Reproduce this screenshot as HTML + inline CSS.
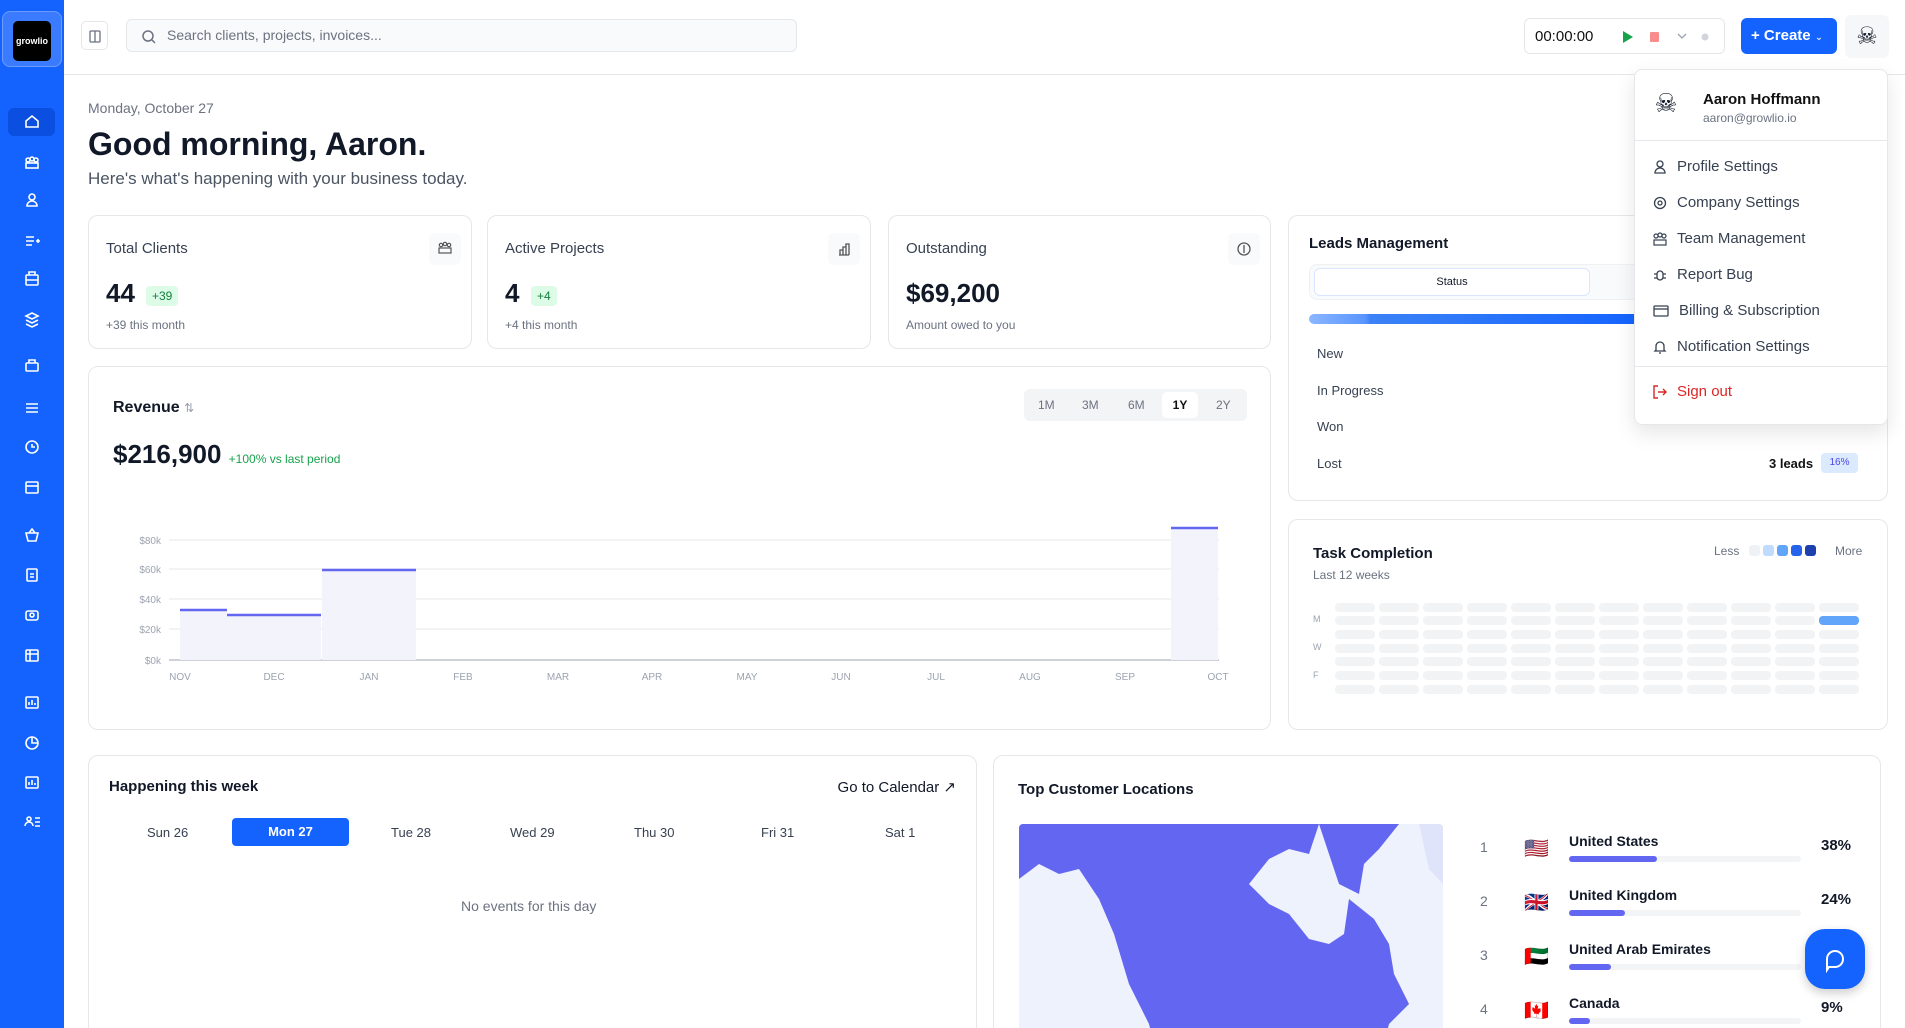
<!DOCTYPE html>
<html style="width:1905px;height:1028px;overflow:hidden"><head><meta charset="utf-8"><style>
*{box-sizing:border-box;margin:0;padding:0}
body{width:1905px;height:1028px;overflow:hidden;background:#fff;font-family:"Liberation Sans",sans-serif;color:#111827;position:relative}
.abs{position:absolute}
.sb{left:0;top:0;width:64px;height:1028px;background:#1463ff}
.card{position:absolute;border:1px solid #e5e7eb;border-radius:10px;background:#fff}
.menu div{position:absolute;left:18px;font-size:15px;color:#374151;display:flex;align-items:center;gap:10px}
.row{position:absolute;font-size:13px;color:#374151}
.muted{color:#6b7280}
</style></head><body>
<div class="abs sb">
 <div class="abs" style="left:2px;top:11px;width:60px;height:56px;border-radius:8px;background:#3a7bff;border:1px solid #6b9bff"></div>
 <div class="abs" style="left:13px;top:21px;width:38px;height:40px;background:#000;border-radius:5px;color:#fff;font-size:9px;font-weight:bold;line-height:40px;text-align:center">growlio</div>
 <div class="abs" style="left:8px;top:108px;width:47px;height:28px;background:#0a4fe0;border-radius:6px"></div>
 <svg class="abs" style="left:0;top:0" width="64" height="1028" fill="none" stroke="#fff" stroke-width="1.6">
  <path d="M26 127v-6l6-5 6 5v6z"/>
  <g transform="translate(0,160)"><circle cx="28" cy="0" r="2"/><circle cx="36" cy="0" r="2"/><circle cx="32" cy="-1" r="2"/><rect x="26" y="3" width="12" height="5"/></g>
  <g transform="translate(0,200)"><circle cx="32" cy="-3" r="3"/><path d="M27 6a5 5 0 0 1 10 0z"/></g>
  <path d="M26 237h8M26 241h8M26 245h6M36 241h4M38 239v4"/>
  <rect x="26" y="275" width="12" height="10" rx="1"/><path d="M29 275v-3h6v3M26 280h12"/>
  <path d="M32 313l6 3-6 3-6-3zM26 320l6 3 6-3M26 324l6 3 6-3"/>
  <rect x="26" y="363" width="12" height="8" rx="1"/><path d="M29 363v-3h6v3"/>
  <path d="M26 404h12M26 408h12M26 412h12"/>
  <circle cx="32" cy="447" r="6"/><path d="M32 444v3h3"/>
  <rect x="26" y="482" width="12" height="11" rx="1"/><path d="M26 486h12"/>
  <path d="M26 533h12l-2 8h-8z M29 533l3-4 3 4"/>
  <rect x="27" y="569" width="10" height="12" rx="1"/><path d="M30 574h4M30 577h4"/>
  <rect x="26" y="611" width="12" height="9" rx="2"/><circle cx="32" cy="615" r="2"/>
  <rect x="26" y="650" width="12" height="11" rx="1"/><path d="M26 654h12M30 650v11"/>
  <rect x="26" y="697" width="12" height="11" rx="1"/><path d="M29 705v-3M32 705v-5M35 705v-2"/>
  <circle cx="32" cy="743" r="6"/><path d="M32 737v6h6"/>
  <rect x="26" y="777" width="12" height="11" rx="1"/><path d="M29 785v-3M32 785v-5M35 785v-2"/>
  <circle cx="29" cy="819" r="2"/><path d="M25 826a4 4 0 0 1 8 0M35 818h5M35 822h5M35 826h5"/>
 </svg>
</div>
<div class="abs" style="left:64px;top:74px;width:1841px;height:1px;background:#e5e7eb"></div>
<div class="abs" style="left:81px;top:21px;width:27px;height:29px;border:1px solid #e5e7eb;border-radius:5px"><svg width="27" height="29" fill="none" stroke="#6b7280" stroke-width="1.3"><rect x="8" y="9" width="10" height="11" rx="1"/><path d="M13 9v11"/></svg></div>
<div class="abs" style="left:126px;top:19px;width:671px;height:33px;border:1px solid #e5e7eb;border-radius:6px;background:#f9fafb;font-size:14px;color:#6b7280;line-height:31px;padding-left:40px">Search clients, projects, invoices...
 <svg class="abs" style="left:14px;top:9px" width="16" height="16" fill="none" stroke="#6b7280" stroke-width="1.5"><circle cx="7" cy="7" r="5"/><path d="M11 11l3 3"/></svg></div>
<div class="abs" style="left:1524px;top:18px;width:201px;height:36px;border:1px solid #e5e7eb;border-radius:6px">
 <span class="abs" style="left:10px;top:9px;font-size:15px;color:#111">00:00:00</span>
 <svg class="abs" style="left:95px;top:10px" width="100" height="16"><path d="M3 2l10 6-10 6z" fill="#16a34a"/><rect x="30" y="3" width="9" height="10" rx="1" fill="#f87171" opacity=".8"/><path d="M58 5l4 4 4-4" stroke="#9ca3af" fill="none" stroke-width="1.3"/><circle cx="85" cy="8" r="3.5" fill="#d1d5db"/></svg>
</div>
<div class="abs" style="left:1741px;top:18px;width:96px;height:36px;background:#1463ff;border-radius:6px;color:#fff;font-size:15px;font-weight:bold;line-height:36px;padding-left:10px">+ Create <span style="font-size:10px;font-weight:normal">&#8964;</span></div>
<div class="abs" style="left:1845px;top:15px;width:44px;height:43px;background:#f6f7f8;border-radius:6px;font-size:24px;text-align:center;line-height:43px">☠</div>
<div class="abs muted" style="left:88px;top:100px;font-size:14px">Monday, October 27</div>
<div class="abs" style="left:88px;top:126px;font-size:32px;font-weight:bold">Good morning, Aaron.</div>
<div class="abs" style="left:88px;top:169px;font-size:17px;color:#4b5563">Here's what's happening with your business today.</div>
<div class="card" style="left:88px;top:215px;width:384px;height:134px">
 <div class="abs" style="left:17px;top:24px;font-size:15px;color:#374151">Total Clients</div>
 <div class="abs" style="right:10px;top:17px;width:32px;height:32px;background:#f9fafb;border-radius:6px"><svg width="32" height="32" fill="none" stroke="#555" stroke-width="1.2"><circle cx="12" cy="12" r="1.7"/><circle cx="20" cy="12" r="1.7"/><circle cx="16" cy="11" r="1.7"/><rect x="10" y="15" width="12" height="5"/></svg></div>
 <div class="abs" style="left:17px;top:62px;font-size:26px;font-weight:bold">44</div>
 <div class="abs" style="left:57px;top:70px;background:#dcfce7;color:#15803d;font-size:12px;padding:3px 6px;border-radius:4px">+39</div>
 <div class="abs muted" style="left:17px;top:102px;font-size:12px">+39 this month</div>
</div>
<div class="card" style="left:487px;top:215px;width:384px;height:134px">
 <div class="abs" style="left:17px;top:24px;font-size:15px;color:#374151">Active Projects</div>
 <div class="abs" style="right:10px;top:17px;width:32px;height:32px;background:#f9fafb;border-radius:6px"><svg width="32" height="32" fill="none" stroke="#555" stroke-width="1.3"><path d="M11 22h10M12 22v-5h3v5M15 22v-8h3v8M18 22v-11h3v11"/></svg></div>
 <div class="abs" style="left:17px;top:62px;font-size:26px;font-weight:bold">4</div>
 <div class="abs" style="left:43px;top:70px;background:#dcfce7;color:#15803d;font-size:12px;padding:3px 6px;border-radius:4px">+4</div>
 <div class="abs muted" style="left:17px;top:102px;font-size:12px">+4 this month</div>
</div>
<div class="card" style="left:888px;top:215px;width:383px;height:134px">
 <div class="abs" style="left:17px;top:24px;font-size:15px;color:#374151">Outstanding</div>
 <div class="abs" style="right:10px;top:17px;width:32px;height:32px;background:#f9fafb;border-radius:6px"><svg width="32" height="32" fill="none" stroke="#555" stroke-width="1.3"><circle cx="16" cy="16" r="6"/><path d="M16 12v8"/></svg></div>
 <div class="abs" style="left:17px;top:62px;font-size:26px;font-weight:bold">$69,200</div>
 <div class="abs muted" style="left:17px;top:102px;font-size:12px">Amount owed to you</div>
</div>
<div class="card" style="left:1288px;top:215px;width:600px;height:286px">
 <div class="abs" style="left:20px;top:19px;font-size:15px;font-weight:bold">Leads Management</div>
 <div class="abs" style="left:20px;top:48px;width:560px;height:36px;background:#f9fafb;border-radius:8px;border:1px solid #f0f1f3"></div>
 <div class="abs" style="left:25px;top:52px;width:276px;height:28px;background:#fff;border:1px solid #dbe5ff;border-radius:6px;font-size:11px;text-align:center;line-height:27px">Status</div>
 <div class="abs" style="left:20px;top:98px;width:560px;height:10px;border-radius:5px;background:linear-gradient(90deg,#8bb6ff 0,#5a95ff 10%,#3b82f6 11%,#1463ff 60%)"></div>
 <div class="row" style="left:28px;top:130px">New</div>
 <div class="row" style="left:28px;top:167px">In Progress</div>
 <div class="row" style="left:28px;top:203px">Won</div>
 <div class="row" style="left:28px;top:240px">Lost</div>
 <div class="row" style="left:480px;top:240px;font-weight:bold;color:#111">3 leads</div>
 <div class="abs" style="left:532px;top:237px;width:37px;height:20px;background:#dbeafe;border-radius:4px;color:#4f46e5;font-size:10px;text-align:center;line-height:20px">16%</div>
</div>
<div class="card" style="left:88px;top:366px;width:1183px;height:364px">
 <div class="abs" style="left:24px;top:32px;font-size:16px;font-weight:bold">Revenue <span style="font-weight:normal;color:#9ca3af;font-size:12px">⇅</span></div>
 <div class="abs" style="left:24px;top:72px;font-size:26px;font-weight:bold">$216,900 <span style="font-size:12px;color:#16a34a;font-weight:normal">+100% vs last period</span></div>
 <div class="abs" style="left:935px;top:22px;width:223px;height:32px;background:#f3f4f6;border-radius:6px;font-size:12px;color:#6b7280">
  <span class="abs" style="left:14px;top:9px">1M</span><span class="abs" style="left:58px;top:9px">3M</span><span class="abs" style="left:104px;top:9px">6M</span>
  <span class="abs" style="left:138px;top:3px;width:36px;height:26px;background:#fff;border-radius:5px;color:#111;font-weight:bold;text-align:center;line-height:26px">1Y</span>
  <span class="abs" style="left:192px;top:9px">2Y</span></div>
 <svg class="abs" style="left:0;top:0" width="1183" height="364" font-size="10" fill="#9ca3af">
  <g stroke="#e5e7eb"><path d="M80 173H1130M80 202H1130M80 232H1130M80 262H1130"/><path d="M80 293H1130" stroke="#9ca3af"/></g>
  <text x="72" y="177" text-anchor="end">$80k</text><text x="72" y="206" text-anchor="end">$60k</text><text x="72" y="236" text-anchor="end">$40k</text><text x="72" y="266" text-anchor="end">$20k</text><text x="72" y="297" text-anchor="end">$0k</text>
  <g fill="#f3f3fc"><rect x="91" y="243" width="47" height="50"/><rect x="138" y="248" width="94" height="45"/><rect x="233" y="203" width="94" height="90"/><rect x="1082" y="161" width="47" height="132"/></g>
  <g stroke="#6366f1" stroke-width="2.5"><path d="M91 243h47M138 248h94M233 203h94M1082 161h47"/></g>
  <g text-anchor="middle"><text x="91" y="313">NOV</text><text x="185" y="313">DEC</text><text x="280" y="313">JAN</text><text x="374" y="313">FEB</text><text x="469" y="313">MAR</text><text x="563" y="313">APR</text><text x="658" y="313">MAY</text><text x="752" y="313">JUN</text><text x="847" y="313">JUL</text><text x="941" y="313">AUG</text><text x="1036" y="313">SEP</text><text x="1129" y="313">OCT</text></g>
 </svg>
</div>
<div class="card" style="left:1288px;top:519px;width:600px;height:211px">
 <div class="abs" style="left:24px;top:25px;font-size:15px;font-weight:bold">Task Completion</div>
 <div class="abs muted" style="left:24px;top:48px;font-size:12px">Last 12 weeks</div>
 <div class="abs muted" style="left:425px;top:24px;font-size:12px">Less</div>
 <svg class="abs" style="left:460px;top:24px" width="80" height="14"><rect x="0" y="1" width="11" height="11" rx="3" fill="#eef2f7"/><rect x="14" y="1" width="11" height="11" rx="3" fill="#bfdbfe"/><rect x="28" y="1" width="11" height="11" rx="3" fill="#60a5fa"/><rect x="42" y="1" width="11" height="11" rx="3" fill="#2563eb"/><rect x="56" y="1" width="11" height="11" rx="3" fill="#1e40af"/></svg>
 <div class="abs muted" style="left:546px;top:24px;font-size:12px">More</div>
 <svg class="abs" style="left:0;top:0" width="600" height="211" font-size="9" fill="#9ca3af">
  <text x="24" y="102">M</text><text x="24" y="130">W</text><text x="24" y="158">F</text>
  <g id="c">
  <rect x="46" y="83" width="40" height="9" rx="4" fill="#f1f3f5"/><rect x="46" y="96" width="40" height="9" rx="4" fill="#f1f3f5"/><rect x="46" y="110" width="40" height="9" rx="4" fill="#f1f3f5"/><rect x="46" y="124" width="40" height="9" rx="4" fill="#f1f3f5"/><rect x="46" y="137" width="40" height="9" rx="4" fill="#f1f3f5"/><rect x="46" y="151" width="40" height="9" rx="4" fill="#f1f3f5"/><rect x="46" y="165" width="40" height="9" rx="4" fill="#f1f3f5"/>
  </g>
  <use href="#c" x="44"/><use href="#c" x="88"/><use href="#c" x="132"/><use href="#c" x="176"/><use href="#c" x="220"/><use href="#c" x="264"/><use href="#c" x="308"/><use href="#c" x="352"/><use href="#c" x="396"/><use href="#c" x="440"/><use href="#c" x="484"/>
  <rect x="530" y="96" width="40" height="9" rx="4" fill="#60a5fa"/>
 </svg>
</div>
<div class="card" style="left:88px;top:755px;width:889px;height:300px">
 <div class="abs" style="left:20px;top:22px;font-size:15px;font-weight:bold">Happening this week</div>
 <div class="abs" style="right:20px;top:22px;font-size:15px">Go to Calendar ↗</div>
 <div class="abs" style="left:0;top:62px;width:889px;height:28px;font-size:13px;color:#374151">
  <span class="abs" style="left:58px;top:7px">Sun 26</span>
  <span class="abs" style="left:143px;top:0;width:117px;height:28px;background:#1463ff;border-radius:4px;color:#fff;font-weight:bold;text-align:center;line-height:28px">Mon 27</span>
  <span class="abs" style="left:302px;top:7px">Tue 28</span><span class="abs" style="left:421px;top:7px">Wed 29</span><span class="abs" style="left:545px;top:7px">Thu 30</span><span class="abs" style="left:672px;top:7px">Fri 31</span><span class="abs" style="left:796px;top:7px">Sat 1</span></div>
 <div class="abs muted" style="left:372px;top:142px;font-size:14px">No events for this day</div>
</div>
<div class="card" style="left:993px;top:755px;width:888px;height:300px">
 <div class="abs" style="left:24px;top:25px;font-size:15px;font-weight:bold">Top Customer Locations</div>
 <div class="abs" style="left:25px;top:68px;width:424px;height:240px;background:#eef2fd;border-radius:4px;overflow:hidden">
  <svg width="424" height="240"><path d="M0 55 L20 40 L40 50 L60 45 L80 75 L95 110 L110 160 L130 200 L140 240 L360 240 L370 200 L390 180 L375 150 L370 120 L355 95 L330 75 L325 110 L310 120 L290 115 L270 90 L250 80 L230 60 L250 35 L270 25 L290 30 L300 0 L0 0Z" fill="#6366f1"/><path d="M300 0 L320 60 L340 70 L345 40 L360 25 L380 0Z" fill="#6366f1"/><path d="M400 0 L424 0 L424 60 L410 45Z" fill="#dfe4fb"/></svg>
 </div>
 <div class="abs muted" style="left:486px;top:83px;font-size:14px">1</div><div class="abs muted" style="left:486px;top:137px;font-size:14px">2</div><div class="abs muted" style="left:486px;top:191px;font-size:14px">3</div><div class="abs muted" style="left:486px;top:245px;font-size:14px">4</div>
 <div class="abs" style="left:530px;top:80px;font-size:20px">🇺🇸</div><div class="abs" style="left:530px;top:134px;font-size:20px">🇬🇧</div><div class="abs" style="left:530px;top:188px;font-size:20px">🇦🇪</div><div class="abs" style="left:530px;top:242px;font-size:20px">🇨🇦</div>
 <div class="abs" style="left:575px;top:77px;font-size:14px;font-weight:bold">United States</div>
 <div class="abs" style="left:575px;top:131px;font-size:14px;font-weight:bold">United Kingdom</div>
 <div class="abs" style="left:575px;top:185px;font-size:14px;font-weight:bold">United Arab Emirates</div>
 <div class="abs" style="left:575px;top:239px;font-size:14px;font-weight:bold">Canada</div>
 <div class="abs" style="left:575px;top:100px;width:232px;height:6px;background:#f3f4f6;border-radius:3px"><div style="width:88px;height:6px;background:#6366f1;border-radius:3px"></div></div>
 <div class="abs" style="left:575px;top:154px;width:232px;height:6px;background:#f3f4f6;border-radius:3px"><div style="width:56px;height:6px;background:#6366f1;border-radius:3px"></div></div>
 <div class="abs" style="left:575px;top:208px;width:232px;height:6px;background:#f3f4f6;border-radius:3px"><div style="width:42px;height:6px;background:#6366f1;border-radius:3px"></div></div>
 <div class="abs" style="left:575px;top:262px;width:232px;height:6px;background:#f3f4f6;border-radius:3px"><div style="width:21px;height:6px;background:#6366f1;border-radius:3px"></div></div>
 <div class="abs" style="left:827px;top:81px;font-size:15px;font-weight:bold">38%</div>
 <div class="abs" style="left:827px;top:135px;font-size:15px;font-weight:bold">24%</div>
 <div class="abs" style="left:827px;top:243px;font-size:15px;font-weight:bold">9%</div>
</div>
<div class="abs" style="left:1805px;top:929px;width:60px;height:60px;background:#1463ff;border-radius:20px;box-shadow:0 4px 10px rgba(0,0,0,.2)"><svg width="60" height="60" fill="none" stroke="#fff" stroke-width="2"><path d="M22 30a8 8 0 0 1 16 0c0 5-4 8-8 8h-6l-2 3z"/></svg></div>
<div class="abs" style="left:1634px;top:69px;width:254px;height:356px;background:#fff;border:1px solid #e5e7eb;border-radius:8px;box-shadow:0 8px 20px rgba(0,0,0,.1)">
 <div class="abs" style="left:14px;top:16px;width:34px;height:34px;font-size:26px;line-height:34px;text-align:center">☠</div>
 <div class="abs" style="left:68px;top:21px;font-size:15px;font-weight:bold;color:#111">Aaron Hoffmann</div>
 <div class="abs muted" style="left:68px;top:41px;font-size:12px">aaron@growlio.io</div>
 <div class="abs" style="left:0;top:70px;width:252px;height:1px;background:#e5e7eb"></div>
 <div class="menu">
  <div style="top:88px"><svg width="14" height="14" fill="none" stroke="#374151" stroke-width="1.3"><circle cx="7" cy="4" r="3"/><path d="M2 13a5 5 0 0 1 10 0z"/></svg>Profile Settings</div>
  <div style="top:124px"><svg width="14" height="14" fill="none" stroke="#374151" stroke-width="1.3"><circle cx="7" cy="7" r="5.5"/><circle cx="7" cy="7" r="2"/></svg>Company Settings</div>
  <div style="top:160px"><svg width="14" height="14" fill="none" stroke="#374151" stroke-width="1.2"><circle cx="3" cy="4" r="2"/><circle cx="11" cy="4" r="2"/><circle cx="7" cy="3" r="2"/><rect x="1" y="8" width="12" height="5"/></svg>Team Management</div>
  <div style="top:196px"><svg width="14" height="14" fill="none" stroke="#374151" stroke-width="1.3"><rect x="4" y="3" width="6" height="9" rx="3"/><path d="M1 6h3M10 6h3M1 10h3M10 10h3"/></svg>Report Bug</div>
  <div style="top:232px"><svg width="16" height="14" fill="none" stroke="#374151" stroke-width="1.3"><rect x="1" y="2" width="14" height="10" rx="1"/><path d="M1 5h14"/></svg>Billing &amp; Subscription</div>
  <div style="top:268px"><svg width="14" height="14" fill="none" stroke="#374151" stroke-width="1.3"><path d="M3 10V6a4 4 0 0 1 8 0v4l1 1H2zM6 13h2"/></svg>Notification Settings</div>
 </div>
 <div class="abs" style="left:0;top:296px;width:252px;height:1px;background:#e5e7eb"></div>
 <div class="abs" style="left:18px;top:313px;font-size:15px;color:#dc2626;display:flex;align-items:center;gap:10px"><svg width="14" height="14" fill="none" stroke="#dc2626" stroke-width="1.4"><path d="M5 1H1v12h4M5 7h8M10 4l3 3-3 3"/></svg>Sign out</div>
</div>
</body></html>
